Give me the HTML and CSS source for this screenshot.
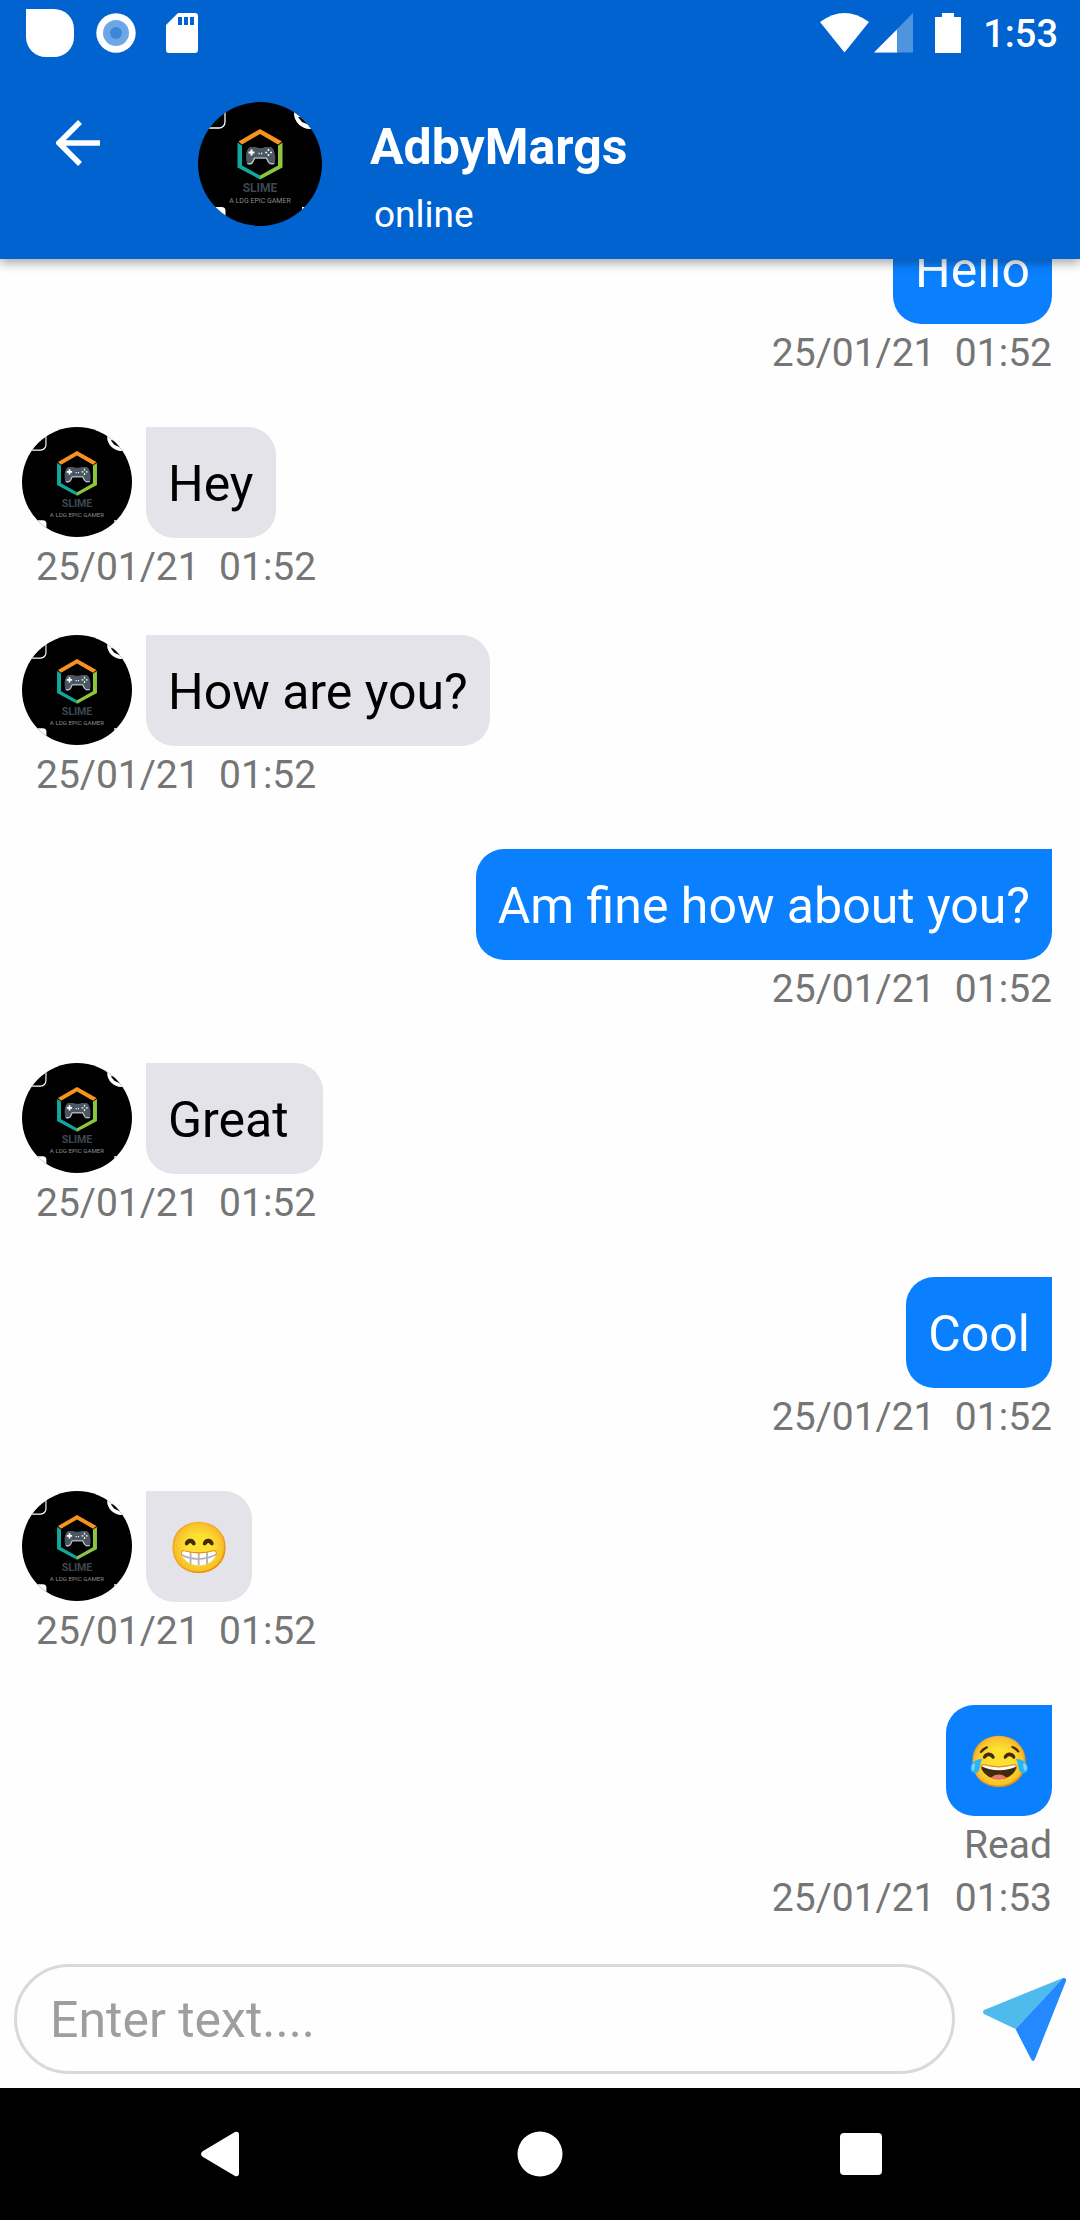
FILE: index.html
```html
<!DOCTYPE html>
<html lang="en">
<head>
<meta charset="utf-8">
<meta name="viewport" content="width=device-width, initial-scale=1">
<title>AdbyMargs</title>
<link rel="stylesheet" href="styles.css">
</head>
<body>
<svg class="defs" aria-hidden="true">
  <defs>
    <clipPath id="disc"><circle cx="62" cy="62" r="62"/></clipPath>
    <symbol id="avatar" viewBox="0 0 124 124">
      <g clip-path="url(#disc)">
        <rect width="124" height="124" fill="#000"/>
        <rect x="-10" y="-10" width="37" height="36" rx="6" fill="none" stroke="#fff" stroke-width="1.3"/>
        <circle cx="112" cy="11" r="16" fill="#fff"/>
        <path d="M100 15l4 5 7 3 4-3-6-4-5-1z" fill="#000"/>
        <rect x="-10" y="105" width="37.500" height="30" rx="4" fill="#fff"/>
        <rect x="104" y="105" width="30" height="30" fill="#fff"/>
        <path d="M40.500 39.500L62 27l22 12.500-4 3L62 32 44 42.500z" fill="#f7921e"/>
        <path d="M39.500 40.500l4.500 3v20l18 10v4L39.500 65.500z" fill="#12a79d"/>
        <path d="M84.500 40.500l-4.500 3v20l-18 10v4l22.500-12z" fill="#8cc63e"/>
        <path d="M52 45h6l2 1h5l2-1h6q3 1 4 8 1 6-1 9-4 2-6-1l-2-4H57l-2 4q-3 3-6 1-1-3-1-9 1-7 4-8z" fill="#4a5763"/>
        <path d="M49.500 61.500q3 1 5-1l2-4.500h12l2 4q2 2.500 6 1.500" fill="none" stroke="#c9cdd0" stroke-width="1.200"/>
        <path d="M53.500 47.500v6M50.500 50.500h6" stroke="#fff" stroke-width="2"/>
        <path d="M70.500 47v2M70.500 52v2M67.200 50.500h2M72 50.500h2M60.500 51.500h1.200M63 51.500h1.200" stroke="#fff" stroke-width="1.500"/>
        <text class="logo-name" x="62" y="90" text-anchor="middle">SLIME</text>
        <text class="logo-tag" x="62" y="101" text-anchor="middle">A LDG EPIC GAMER</text>
      </g>
    </symbol>
  </defs>
</svg>
<div class="app">
  <header class="top">
    <div class="status">
      <div class="status-group status-left">
        <svg width="48" height="48" viewBox="0 0 48 48"><path d="M0 0h28a20 20 0 0 1 20 20v8a20 20 0 0 1-20 20h-8A20 20 0 0 1 0 28z" fill="#fff"/></svg>
        <svg width="40" height="40" viewBox="0 0 40 40"><circle cx="20" cy="20" r="19.700" fill="#fff"/><circle cx="20" cy="20" r="13" fill="#6ea7e5"/><circle cx="20" cy="20" r="6" fill="#3d87da"/></svg>
        <svg class="card-icon" width="32" height="40" viewBox="0 0 32 40"><path d="M12 0h17q3 0 3 3v34q0 3-3 3H3q-3 0-3-3V12z" fill="#fff"/><path d="M12 4h4v8h-4zM18 4h4v8h-4zM24 4h4v8h-4z" fill="#0063cf"/></svg>
      </div>
      <div class="status-group status-right">
        <svg width="93" height="40" viewBox="0 0 93 40"><path d="M0 9Q24.500-9 49 9L24.500 39.500z" fill="#fff"/><path d="M93 0v39.500H54z" fill="#4f94df"/><path d="M77 16.500v23H54z" fill="#fff"/></svg>
        <svg width="26" height="40" viewBox="0 0 26 40"><path d="M7 0h12v4h7v36H0V4h7z" fill="#fff"/></svg>
        <span class="clock">1:53</span>
      </div>
    </div>
    <div class="toolbar">
      <button class="back" type="button" aria-label="Back">
        <svg width="44" height="46" viewBox="0 0 44 46"><path d="M24 2L3 23l21 21M3 23h41" fill="none" stroke="#fff" stroke-width="5.500"/></svg>
      </button>
      <svg class="avatar-large" role="img" aria-label="AdbyMargs"><use href="#avatar"/></svg>
      <div class="contact">
        <h1 class="name">AdbyMargs</h1>
        <p class="presence">online</p>
      </div>
    </div>
  </header>

  <main class="scroller">
    <ol class="messages">
      <li class="message sent"><p class="bubble">Hello</p><time class="meta">25/01/21&nbsp; 01:52</time></li>
      <li class="message received"><div class="line"><svg class="avatar" aria-hidden="true"><use href="#avatar"/></svg><p class="bubble">Hey</p></div><time class="meta">25/01/21&nbsp; 01:52</time></li>
      <li class="message received"><div class="line"><svg class="avatar" aria-hidden="true"><use href="#avatar"/></svg><p class="bubble">How are you?</p></div><time class="meta">25/01/21&nbsp; 01:52</time></li>
      <li class="message sent"><p class="bubble">Am fine how about you?</p><time class="meta">25/01/21&nbsp; 01:52</time></li>
      <li class="message received"><div class="line"><svg class="avatar" aria-hidden="true"><use href="#avatar"/></svg><p class="bubble">Great&nbsp;</p></div><time class="meta">25/01/21&nbsp; 01:52</time></li>
      <li class="message sent"><p class="bubble">Cool</p><time class="meta">25/01/21&nbsp; 01:52</time></li>
      <li class="message received"><div class="line"><svg class="avatar" aria-hidden="true"><use href="#avatar"/></svg><p class="bubble">😁</p></div><time class="meta">25/01/21&nbsp; 01:52</time></li>
      <li class="message sent"><p class="bubble">😂</p><span class="meta">Read</span><time class="meta">25/01/21&nbsp; 01:53</time></li>
    </ol>
  </main>

  <form class="composer">
    <input class="field" type="text" placeholder="Enter text...." aria-label="Message">
    <button class="send" type="button" aria-label="Send">
      <svg width="83" height="83" viewBox="0 0 83 83"><path d="M80 0L1 32q-2 2 0 4l31.500 15z" fill="#4fbaec"/><path d="M80 0q4 0 3 3L52 81q-2 4-4 0L32.500 51z" fill="#2488ff"/></svg>
    </button>
  </form>

  <nav class="system">
    <button class="key" type="button" aria-label="Back"><svg width="40" height="48" viewBox="0 0 40 48"><path d="M35 2q4-1 4 3v38q0 4-4 3L3 27q-4-3 0-6z" fill="#fff"/></svg></button>
    <button class="key" type="button" aria-label="Home"><svg width="46" height="46" viewBox="0 0 46 46"><circle cx="23" cy="23" r="22.500" fill="#fff"/></svg></button>
    <button class="key" type="button" aria-label="Recent apps"><svg width="42" height="42" viewBox="0 0 42 42"><rect width="42" height="42" rx="4" fill="#fff"/></svg></button>
  </nav>
</div>
</body>
</html>
```
FILE: styles.css
```css
* { box-sizing: border-box; }

body {
  margin: 0;
  font-family: Roboto, "Liberation Sans", sans-serif;
  background: #fefefe;
}

svg { display: block; }

button {
  padding: 0;
  border: 0;
  background: none;
}

.defs {
  position: absolute;
  width: 0;
  height: 0;
}

.app {
  display: flex;
  flex-direction: column;
  height: 100vh;
}

/* Header */
.top {
  position: relative;
  z-index: 1;
  flex: none;
  padding-bottom: 22px;
  color: #fff;
  background: #0063cf;
  box-shadow: 0 4px 10px rgba(0, 0, 0, 0.35);
}

.status {
  display: flex;
  justify-content: space-between;
  align-items: center;
  height: 66px;
  padding: 0 22px 0 26px;
}

.status-group {
  display: flex;
  align-items: center;
  gap: 22px;
}

.card-icon { margin-left: 8px; }

.clock {
  font-size: 38px;
  font-weight: 500;
  line-height: 48px;
  padding-top: 2px;
}

.toolbar {
  display: flex;
  align-items: flex-start;
  padding: 36px 56px 0;
}

.back { padding: 18px 0; }

.avatar-large {
  width: 124px;
  height: 124px;
  margin: 0 48px 0 98px;
}

.contact { padding-top: 15px; }

.name {
  margin: 0;
  font-size: 50px;
  font-weight: 700;
  line-height: 60px;
}

.presence {
  margin: 16px 0 0 4px;
  font-size: 37px;
  line-height: 44px;
}

.logo-name {
  font: 700 12px Roboto, sans-serif;
  fill: #3b4852;
}

.logo-tag {
  font: 400 7px Roboto, sans-serif;
  fill: #8a8a8a;
}

/* Conversation: opens at the newest message */
.scroller {
  display: flex;
  flex: 1;
  flex-direction: column-reverse;
  min-height: 0;
  overflow-y: auto;
  scrollbar-width: none;
}

.messages {
  margin: 0;
  padding: 0 28px 28px 22px;
  list-style: none;
}

.message {
  display: flex;
  flex-direction: column;
  padding-bottom: 44px;
}

.sent {
  align-items: flex-end;
  margin: 6px 0;
}

.received { align-items: flex-start; }

.messages .message:last-child {
  margin-bottom: 0;
  padding-bottom: 0;
}

.line {
  display: flex;
  align-items: flex-start;
  gap: 14px;
}

.avatar {
  width: 110px;
  height: 110px;
}

.bubble {
  margin: 0;
  padding: 28px 22px 24px;
  font-size: 50px;
  line-height: 59px;
  border-radius: 28px;
}

.sent .bubble {
  color: #fff;
  background: #0a80ff;
  border-top-right-radius: 0;
}

.received .bubble {
  color: #000;
  background: #e4e3e9;
  border-top-left-radius: 0;
}

.meta {
  padding-top: 5px;
  font-size: 39px;
  line-height: 48px;
  color: #757575;
}

.received .meta { padding-left: 14px; }

/* Message box */
.composer {
  display: flex;
  flex: none;
  align-items: center;
  gap: 28px;
  padding: 14px 14px 14px 14px;
}

.field {
  flex: 1;
  min-width: 0;
  height: 110px;
  padding: 2px 33px 0;
  font: 400 50px/60px Roboto, "Liberation Sans", sans-serif;
  color: #000;
  background: #fefefe;
  border: 3px solid #d9d9d9;
  border-radius: 55px;
}

.field::placeholder {
  color: #9e9e9e;
  opacity: 1;
}

/* System keys */
.system {
  display: flex;
  flex: none;
  justify-content: space-between;
  align-items: center;
  height: 132px;
  padding: 0 198px 0 200px;
  background: #000;
}
```
